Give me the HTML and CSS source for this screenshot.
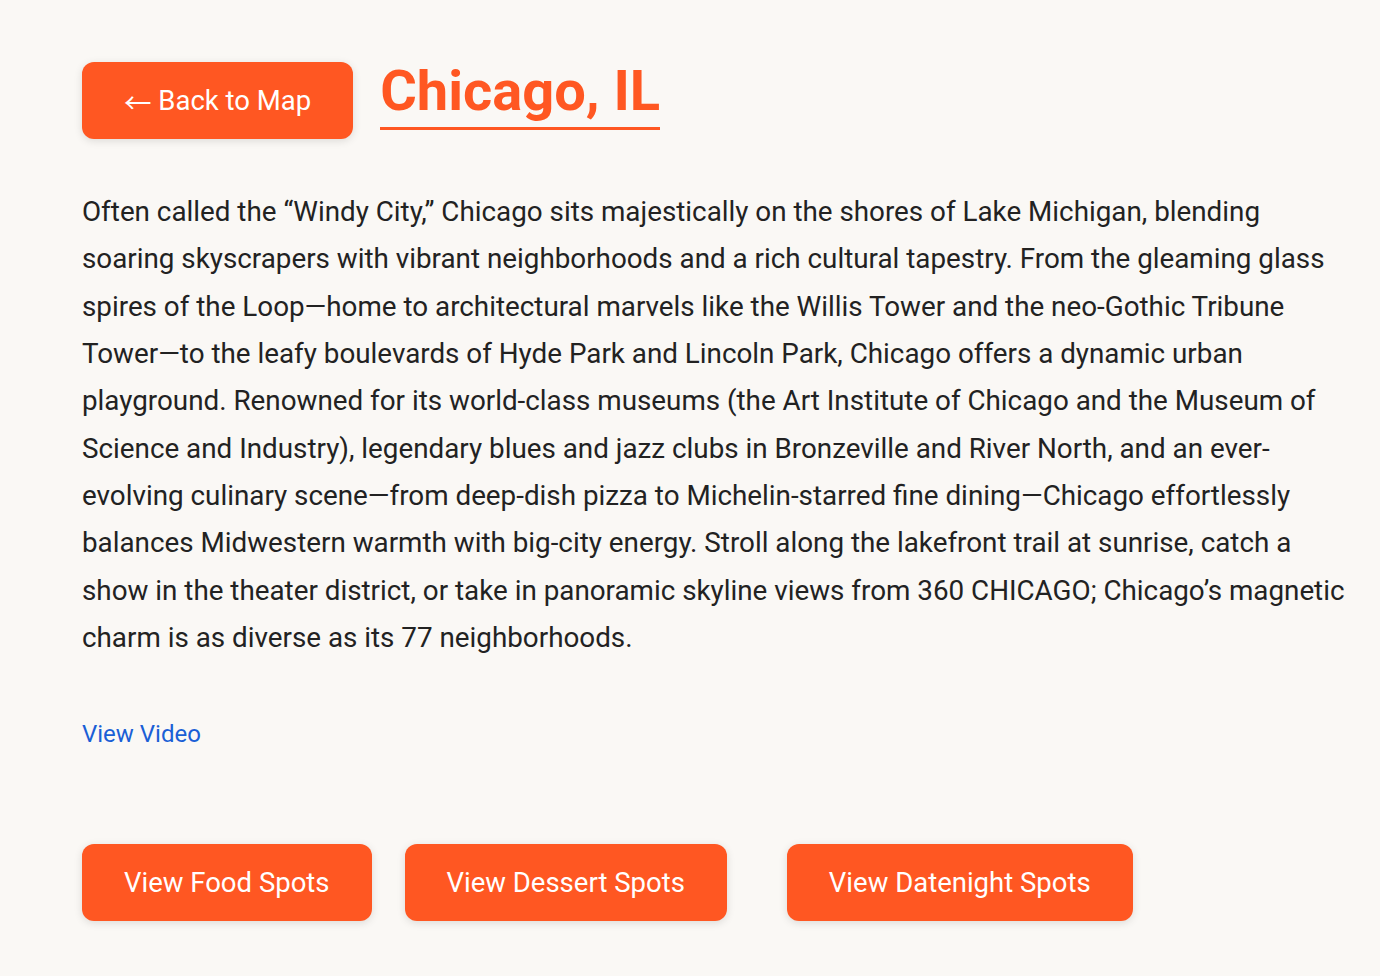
FILE: index.html
```html
<!DOCTYPE html>
<html lang="en">
<head>
<meta charset="utf-8">
<title>Chicago, IL</title>
<link rel="stylesheet" href="styles.css">
</head>
<body>
<main class="page">
  <header class="header">
    <a class="btn btn-back" href="#"><span class="arrow">&larr;</span> Back to Map</a>
    <h1 class="title">Chicago, IL</h1>
  </header>
  <p class="description">Often called the “Windy City,” Chicago sits majestically on the shores of Lake Michigan, blending soaring skyscrapers with vibrant neighborhoods and a rich cultural tapestry. From the gleaming glass spires of the Loop—home to architectural marvels like the Willis Tower and the neo-Gothic Tribune Tower—to the leafy boulevards of Hyde Park and Lincoln Park, Chicago offers a dynamic urban playground. Renowned for its world-class museums (the Art Institute of Chicago and the Museum of Science and Industry), legendary blues and jazz clubs in Bronzeville and River North, and an ever-evolving culinary scene—from deep-dish pizza to Michelin-starred fine dining—Chicago effortlessly balances Midwestern warmth with big-city energy. Stroll along the lakefront trail at sunrise, catch a show in the theater district, or take in panoramic skyline views from 360 CHICAGO; Chicago’s magnetic charm is as diverse as its 77 neighborhoods.</p>
  <a class="video-link" href="#">View Video</a>
  <nav class="spots">
    <a class="btn btn-spot spot-food" href="#">View Food Spots</a>
    <a class="btn btn-spot spot-dessert" href="#">View Dessert Spots</a>
    <a class="btn btn-spot spot-date" href="#">View Datenight Spots</a>
  </nav>
</main>
</body>
</html>
```

FILE: styles.css
```css
* { box-sizing: border-box; }
html, body {
  margin: 0;
  padding: 0;
  background: #faf8f5;
}
body {
  font-family: Roboto, "Liberation Sans", Arial, sans-serif;
  color: #222222;
}
.page {
  padding: 62px 32px 40px 82px;
  display: flex;
  flex-direction: column;
  align-items: flex-start;
}
.header {
  display: flex;
  align-items: flex-start;
  gap: 27px;
}
.btn {
  display: inline-flex;
  align-items: center;
  justify-content: center;
  height: 77px;
  padding: 0 42px;
  background: #ff5722;
  color: #ffffff;
  font-size: 27.5px;
  text-decoration: none;
  border-radius: 12px;
  box-shadow: 0 2px 8px rgba(0, 0, 0, 0.12);
  white-space: pre;
}
.arrow {
  font-family: "Noto Sans CJK JP", "DejaVu Sans", sans-serif;
}
.title {
  margin: 1px 0 0 0;
  color: #ff5722;
  font-size: 56px;
  font-weight: 700;
  line-height: 56px;
  padding-bottom: 8px;
  border-bottom: 3px solid #ff5722;
}
.description {
  margin: 49px 0 0 0;
  font-size: 27.8px;
  line-height: 47.33px;
}
.video-link {
  margin-top: 59px;
  color: #1a5fd6;
  font-size: 24px;
  text-decoration: none;
}
.spots {
  display: flex;
  margin-top: 96px;
}
.spot-dessert { margin-left: 33px; }
.spot-date { margin-left: 60px; }
```
